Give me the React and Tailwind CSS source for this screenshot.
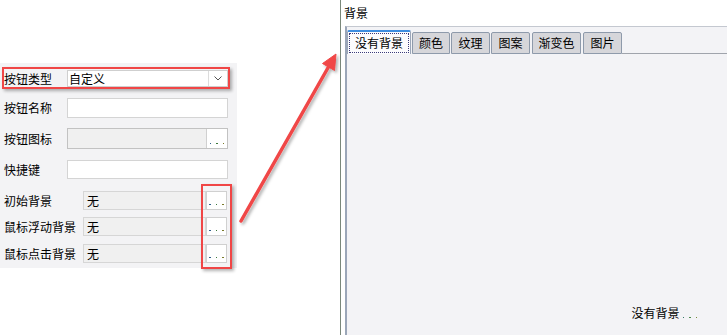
import React from "react";

const F = { fontFamily: '"Noto Sans CJK SC", "Liberation Sans", sans-serif' };

function Dots({ className = "" }) {
  return (
    <span className={"flex items-end gap-[5px] pb-[4px] " + className}>
      <span className="w-[1.5px] h-[1.5px] bg-[#2f5f8a]" />
      <span className="w-[1.5px] h-[1.5px] bg-[#3c7a3c]" />
      <span className="w-[1.5px] h-[1.5px] bg-[#7a7a2a]" />
    </span>
  );
}

function Label({ children, w }) {
  return (
    <div className={"pl-[4px] shrink-0 text-[12px] leading-none text-black " + w}>{children}</div>
  );
}

function BgRow({ label, mt }) {
  return (
    <div className={"flex items-center h-[19px] " + mt}>
      <Label w="w-[83px]">{label}</Label>
      <div className="w-[123px] h-full bg-[#f0f0f0] border border-[#d6d6d6] flex items-center pl-[3px] text-[12px] leading-none">无</div>
      <div className="w-[21px] h-full bg-white border border-[#d0d0d0] flex justify-center items-end">
        <Dots />
      </div>
    </div>
  );
}

export default function App() {
  return (
    <div className="w-[727px] h-[335px] bg-white relative overflow-hidden flex" style={F}>
      {/* Left area */}
      <div className="w-[340px] shrink-0 pt-[63px]">
        <div className="w-[237px] h-[205px] bg-[#f3f3f5] flex flex-col">
          {/* Row 1 combo */}
          <div className="flex items-center h-[17px] mt-[7px]">
            <Label w="w-[67px]">按钮类型</Label>
            <div className="w-[161px] h-full bg-white border border-[#cfcfcf] flex items-center">
              <div className="flex-1 pl-[1px] text-[12px] leading-none">自定义</div>
              <div className="w-[19px] h-full border-l border-[#dcdcdc] flex items-center justify-center">
                <svg width="8" height="5" viewBox="0 0 8 5">
                  <path d="M0.5 0.5 L4 4 L7.5 0.5" fill="none" stroke="#555" strokeWidth="1" />
                </svg>
              </div>
            </div>
          </div>
          {/* Row 2 */}
          <div className="flex items-center h-[20px] mt-[11px]">
            <Label w="w-[67px]">按钮名称</Label>
            <div className="w-[161px] h-full bg-white border border-[#d4d4d4]" />
          </div>
          {/* Row 3 */}
          <div className="flex items-center h-[21px] mt-[10px]">
            <Label w="w-[67px]">按钮图标</Label>
            <div className="w-[161px] h-full border border-[#c2c2c2] flex">
              <div className="flex-1 bg-[#f0f0f0]" />
              <div className="w-[21px] bg-white border-l border-[#d0d0d0] flex justify-center items-end">
                <Dots />
              </div>
            </div>
          </div>
          {/* Row 4 */}
          <div className="flex items-center h-[19px] mt-[11px]">
            <Label w="w-[67px]">快捷键</Label>
            <div className="w-[161px] h-full bg-white border border-[#d4d4d4]" />
          </div>
          <BgRow label="初始背景" mt="mt-[12px]" />
          <BgRow label="鼠标浮动背景" mt="mt-[7px]" />
          <BgRow label="鼠标点击背景" mt="mt-[8px]" />
        </div>
      </div>

      {/* Right panel */}
      <div className="flex-1 border-l border-[#7a887a] flex flex-col">
        <div className="h-[26px] pl-[3px] flex items-center text-[12px] leading-none text-black">背景</div>
        <div className="flex-1 ml-[4px] border-l-2 border-[#9ba6b8] border-t border-t-[#c4c8d0] bg-[#f3f3f6] flex flex-col">
          <div className="flex items-end h-[27px] pt-[3px]">
            {/* selected tab */}
            <div className="w-[64px] h-[24px] bg-[#fbfbfd] border-t-2 border-t-[#3d8de0] border-x border-x-[#9ba6b8] rounded-t-[2px] flex p-[1px]">
              <div className="flex-1 border border-dotted border-[#3a3a7a] flex items-center justify-center text-[12px] leading-none">没有背景</div>
            </div>
            {[
              ["颜色", "w-[38px]", "ml-[1px]"],
              ["纹理", "w-[39px]", "ml-[1px]"],
              ["图案", "w-[39px]", "ml-[1px]"],
              ["渐变色", "w-[49px]", "ml-[2px]"],
              ["图片", "w-[39px]", "ml-[2px]"],
            ].map(([t, w, m]) => (
              <div
                key={t}
                className={"h-[22px] bg-[#d6d6da] border border-[#8e9aab] rounded-t-[2px] flex items-center justify-center text-[12px] leading-none " + w + " " + m}
              >
                {t}
              </div>
            ))}
            <div className="flex-1 h-[1px] bg-[#a0a4ac]" />
          </div>
          <div className="flex-1 flex items-end justify-end pr-[30px] pb-[16px]">
            <div className="flex items-end text-[12px] leading-none">
              <span>没有背景</span>
              <span className="flex items-end gap-[5px] pl-[3px] pb-[1px]">
                <span className="w-[1.5px] h-[1.5px] bg-[#3a7a6a]" />
                <span className="w-[1.5px] h-[1.5px] bg-[#4a8a4a]" />
                <span className="w-[1.5px] h-[1.5px] bg-[#7a8a3a]" />
              </span>
            </div>
          </div>
        </div>
      </div>

      {/* Red highlight boxes */}
      <div className="absolute left-[2px] top-[67px] w-[228px] h-[22px] border-2 border-[#f04646] shadow-[2px_2px_3px_rgba(0,0,0,0.3)]" />
      <div className="absolute left-[201px] top-[184px] w-[31px] h-[85px] border-2 border-[#f04646] shadow-[2px_2px_3px_rgba(0,0,0,0.3)]" />

      {/* Arrow */}
      <svg className="absolute left-[230px] top-[40px]" width="120" height="200" viewBox="230 40 120 200">
        <defs>
          <filter id="sh" x="-20%" y="-20%" width="140%" height="140%">
            <feDropShadow dx="2" dy="2" stdDeviation="1.5" floodColor="#000" floodOpacity="0.3" />
          </filter>
        </defs>
        <g filter="url(#sh)">
          <line x1="241" y1="221" x2="329" y2="66" stroke="#f04646" strokeWidth="3.5" strokeLinecap="round" />
          <polygon points="336,54 322.5,63.5 334.5,70.5" fill="#f04646" stroke="#f04646" strokeWidth="1" strokeLinejoin="round" />
        </g>
      </svg>
    </div>
  );
}
